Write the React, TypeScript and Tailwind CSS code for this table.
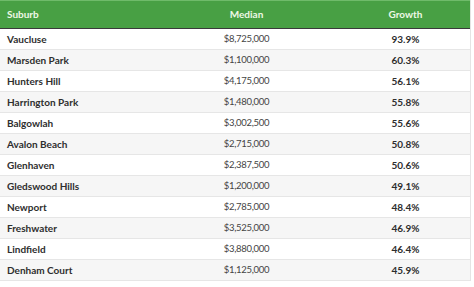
import React from "react";

const rows: [string, string, string][] = [
  ["Vaucluse", "$8,725,000", "93.9%"],
  ["Marsden Park", "$1,100,000", "60.3%"],
  ["Hunters Hill", "$4,175,000", "56.1%"],
  ["Harrington Park", "$1,480,000", "55.8%"],
  ["Balgowlah", "$3,002,500", "55.6%"],
  ["Avalon Beach", "$2,715,000", "50.8%"],
  ["Glenhaven", "$2,387,500", "50.6%"],
  ["Gledswood Hills", "$1,200,000", "49.1%"],
  ["Newport", "$2,785,000", "48.4%"],
  ["Freshwater", "$3,525,000", "46.9%"],
  ["Lindfield", "$3,880,000", "46.4%"],
  ["Denham Court", "$1,125,000", "45.9%"],
];

export default function App() {
  return (
    <div className="w-[474px] h-[287px] bg-white overflow-hidden" style={{ fontFamily: "Lato, 'Open Sans', sans-serif" }}>
      <div className="w-[471px] border-r border-[#e4e4e4]">
        <div className="flex h-[29px] items-center bg-[#48a044] border-t border-[#6fbb6a] border-b border-b-[#3a3a3a] text-[10px] font-bold text-[#eef8e6]">
          <div className="w-[152px] pl-[7px]">Suburb</div>
          <div className="w-[189px] text-center">Median</div>
          <div className="flex-1 text-center">Growth</div>
        </div>
        {rows.map((r, i) => (
          <div
            key={r[0]}
            className={`flex h-[21px] items-center border-b border-[#e6e6e6] text-[10px] ${i % 2 === 1 ? "bg-[#f6f6f6]" : "bg-white"}`}
          >
            <div className="w-[152px] pl-[7px] font-bold text-[#2e2e2e]">{r[0]}</div>
            <div className="w-[189px] text-center text-[#444] text-[9.5px] tracking-[-0.03em]">{r[1]}</div>
            <div className="flex-1 text-center font-bold text-[#2e2e2e]">{r[2]}</div>
          </div>
        ))}
      </div>
    </div>
  );
}
